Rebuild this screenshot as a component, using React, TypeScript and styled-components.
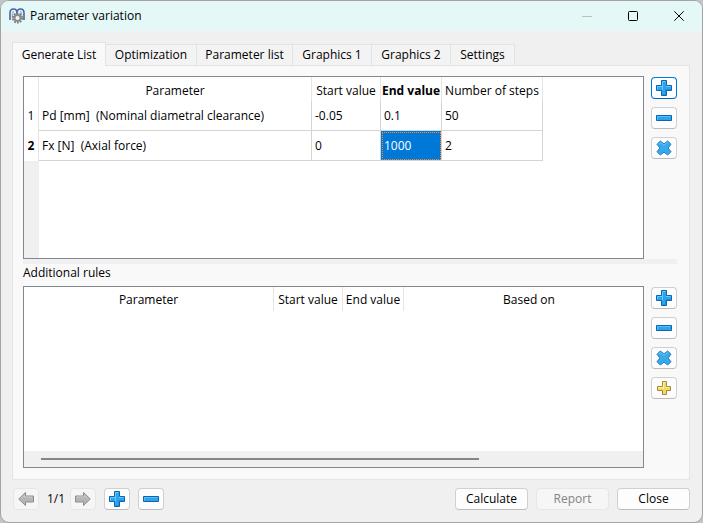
import React from "react";
import styled, { createGlobalStyle, css } from "styled-components";

const GlobalStyle = createGlobalStyle`
  * { box-sizing: border-box; }
  body {
    margin: 0;
    background: #c4c4c6;
    color: #000;
    font: 12px/16px "Open Sans", "Noto Sans", sans-serif;
  }
  button { font: inherit; color: inherit; }
`;

const Window = styled.div`
  display: flex;
  flex-direction: column;
  min-height: 100vh;
  border: 1px solid #a3a3a3;
  border-radius: 9px;
  background: #f0f0f0;
  overflow: hidden;
`;

const TitleBar = styled.header`
  display: flex;
  align-items: center;
  height: 30px;
  padding-left: 8px;
  background: #e3f8f7;
`;

const Title = styled.h1`
  flex: 1;
  margin: 0 0 0 5px;
  font-size: 12px;
  font-weight: 400;
`;

const CaptionButton = styled.button`
  display: grid;
  place-items: center;
  width: 46px;
  height: 30px;
  padding: 0;
  border: 0;
  background: none;
`;

const Body = styled.main`
  flex: 1;
  display: flex;
  flex-direction: column;
  padding: 11px 12px 12px 11px;
`;

const TabList = styled.div`
  display: flex;
  align-items: flex-end;
  height: 24px;
`;

const Tab = styled.button<{ $width: number; $active?: boolean }>`
  position: relative;
  width: ${(p) => p.$width}px;
  height: 22px;
  padding: 0;
  border: 1px solid #e3e3e3;
  border-left-width: 0;
  background: #f3f3f3;
  white-space: nowrap;
  ${(p) =>
    p.$active &&
    css`
      z-index: 1;
      height: 24px;
      border-left-width: 1px;
      border-bottom: 0;
      background: #f9f9f9;
    `}
`;

const Pane = styled.section`
  flex: 1;
  display: flex;
  flex-direction: column;
  margin-top: -1px;
  padding: 10px 12px 11px 10px;
  border: 1px solid #e5e5e5;
  background: #f9f9f9;
`;

const Section = styled.div`
  flex: 1 1 0px;
  display: flex;
  gap: 7px;
`;

const TableFrame = styled.div`
  flex: 1;
  min-width: 0;
  display: flex;
  flex-direction: column;
  border: 1px solid #828790;
  background: #fff;
  overflow: hidden;
`;

const Grid = styled.table`
  table-layout: fixed;
  width: 0;
  border-collapse: separate;
  border-spacing: 0;
  white-space: pre;
`;

const Col = styled.col<{ $width: number }>`
  width: ${(p) => p.$width}px;
`;

const HeadCell = styled.th<{ $bold?: boolean }>`
  height: 24px;
  padding: 3px 0 0;
  border-right: 1px solid #e5e5e5;
  font-weight: ${(p) => (p.$bold ? 700 : 400)};
  text-align: center;
`;

const RowHead = styled(HeadCell)`
  height: 30px;
  padding: 0;
`;

const Cell = styled.td<{ $selected?: boolean }>`
  height: 30px;
  padding: 0 3px;
  border-right: 1px solid #d4d4d4;
  border-bottom: 1px solid #d4d4d4;
  ${(p) =>
    p.$selected &&
    css`
      background: #0078d7;
      color: #fff;
      outline: 1px dotted #ff8728;
      outline-offset: -2px;
    `}
`;

const HeadFiller = styled.div`
  flex: 1;
  width: 15px;
  background: #f0f0f0;
`;

const ScrollTrack = styled.div`
  margin-top: auto;
  height: 16px;
  padding: 7px 164px 0 17px;
  background: #f0f0f0;
`;

const ScrollThumb = styled.div`
  height: 2px;
  background: #858585;
`;

const Tools = styled.div`
  display: flex;
  flex-direction: column;
  gap: 8px;
  padding-top: 1px;
`;

const PushButton = styled.button<{ $focused?: boolean }>`
  display: grid;
  place-items: center;
  width: 73px;
  height: 22px;
  padding: 0;
  border: 1px solid ${(p) => (p.$focused ? "#0078d4" : "#d0d0d0")};
  border-bottom-color: ${(p) => (p.$focused ? "#0067c0" : "#bcbcbc")};
  border-radius: 4px;
  background: #fdfdfd;
  &:disabled {
    border-color: #e6e6e6;
    background: #f6f6f6;
    color: #838383;
  }
`;

const IconButton = styled(PushButton)`
  width: 26px;
`;

const Splitter = styled.div`
  height: 5px;
  background: #f0f0f0;
`;

const SectionTitle = styled.h2`
  margin: 0;
  height: 22px;
  font-size: 12px;
  line-height: 18px;
  font-weight: 400;
`;

const Footer = styled.footer`
  display: flex;
  align-items: center;
  gap: 8px;
  padding: 8px 0 0 1px;
`;

const PageLabel = styled.span`
  width: 15px;
  white-space: nowrap;
`;

const Spacer = styled.div`
  flex: 1;
`;

function AppIcon() {
  return (
    <svg width="16" height="16" viewBox="0 0 16 16" fill="none" aria-hidden="true">
      <path d="M1 12V5Q1 1 4.500 1T8 5V8M8 5Q8 1 11.500 1T15 5V12" stroke="#4a64a0" strokeWidth="1.600" />
      <path d="M3.500 11V6Q3.500 3.500 5 3.500M12.500 11V6Q12.500 3.500 11 3.500" stroke="#a9b9dc" strokeWidth="1.500" />
      <circle cx="8.500" cy="10" r="4.600" stroke="#777" strokeWidth="1.800" strokeDasharray="1.700 1.200" />
      <circle cx="8.500" cy="10" r="3" fill="#f4f4f4" stroke="#8d8d8d" strokeWidth="2" />
    </svg>
  );
}

function PlusIcon() {
  return (
    <svg width="16" height="16" viewBox="0 0 16 16" aria-hidden="true">
      <path d="M5.500.5h5v5h5v5h-5v5h-5v-5h-5v-5h5z" fill="#2da5ee" stroke="#0b66b1" />
      <path d="M6.500 10V1.500h3M1.500 9.500v-3h5M10 6.500h4.500" fill="none" stroke="#6cc8fa" />
      <path d="M7 14.500h2.500v-5h5" fill="none" stroke="#1d8ddc" />
    </svg>
  );
}

function MinusIcon() {
  return (
    <svg width="16" height="16" viewBox="0 0 16 16" aria-hidden="true">
      <path d="M.5 5.500h15v5H.5z" fill="#2da5ee" stroke="#0b66b1" />
      <path d="M1.500 9.500v-3h13" fill="none" stroke="#5cbff8" />
    </svg>
  );
}

function CrossIcon() {
  return (
    <svg width="16" height="16" viewBox="0 0 16 16" aria-hidden="true">
      <path
        d="M4.300 1 8 3.800 11.700 1 15 4.300 12.200 8 15 11.700 11.700 15 8 12.200 4.300 15 1 11.700 3.800 8 1 4.300z"
        fill="#38a9ec"
        stroke="#2a7fbf"
        strokeLinejoin="round"
      />
      <path d="M2.500 4.300 4.300 2.500 8 5.200l3.700-2.700" fill="none" stroke="#6cc4f5" />
    </svg>
  );
}

function YellowPlusIcon() {
  return (
    <svg width="16" height="16" viewBox="0 0 16 16" aria-hidden="true">
      <path d="M6.500 1.500h4v5h4v4h-4v4h-4v-4h-5v-4h5z" fill="#f0d968" stroke="#a98b2c" />
      <path d="M7.500 9V2.500h2M2.500 9V7.500h5M10 7.500h3.500" fill="none" stroke="#fbf0a8" />
    </svg>
  );
}

function ArrowIcon({ direction }: { direction: "left" | "right" }) {
  return (
    <svg width="16" height="16" viewBox="0 0 16 16" aria-hidden="true">
      <path
        d={direction === "left" ? "M.7 8 7.500 1.500v3.500h8v6h-8v3.500z" : "M15.300 8 8.500 1.500v3.500h-8v6h8v3.500z"}
        fill="#b5b5b5"
        stroke="#8c8c8c"
      />
      <path d={direction === "left" ? "M2.500 8l4-4v2h8" : "M1.500 6h8v-2l4 4"} fill="none" stroke="#cdcdcd" />
    </svg>
  );
}

const tabs = [
  { label: "Generate List", width: 94 },
  { label: "Optimization", width: 91 },
  { label: "Parameter list", width: 96 },
  { label: "Graphics 1", width: 79 },
  { label: "Graphics 2", width: 79 },
  { label: "Settings", width: 64 },
];

const parameters = [
  ["Pd [mm]  (Nominal diametral clearance)", "-0.05", "0.1", "50"],
  ["Fx [N]  (Axial force)", "0", "1000", "2"],
];

export default function App() {
  return (
    <>
      <GlobalStyle />
      <Window>
        <TitleBar>
          <AppIcon />
          <Title>Parameter variation</Title>
          <CaptionButton aria-label="Minimize" disabled>
            <svg width="10" height="10" viewBox="0 0 10 10">
              <path d="M0 5.500h10" stroke="#b3c4c3" />
            </svg>
          </CaptionButton>
          <CaptionButton aria-label="Maximize">
            <svg width="10" height="10" viewBox="0 0 10 10">
              <rect x=".5" y=".5" width="9" height="9" rx="1" fill="none" stroke="#000" />
            </svg>
          </CaptionButton>
          <CaptionButton aria-label="Close window">
            <svg width="10" height="10" viewBox="0 0 10 10">
              <path d="M.3.3l9.400 9.400M9.700.3.3 9.700" stroke="#000" />
            </svg>
          </CaptionButton>
        </TitleBar>
        <Body>
          <TabList role="tablist">
            {tabs.map((tab, i) => (
              <Tab key={tab.label} role="tab" aria-selected={i === 0} $active={i === 0} $width={tab.width}>
                {tab.label}
              </Tab>
            ))}
          </TabList>
          <Pane role="tabpanel">
            <Section>
              <TableFrame>
                <Grid>
                  <colgroup>
                    <Col $width={15} />
                    <Col $width={273} />
                    <Col $width={69} />
                    <Col $width={61} />
                    <Col $width={101} />
                  </colgroup>
                  <thead>
                    <tr>
                      <HeadCell />
                      <HeadCell>Parameter</HeadCell>
                      <HeadCell>Start value</HeadCell>
                      <HeadCell $bold>End value</HeadCell>
                      <HeadCell>Number of steps</HeadCell>
                    </tr>
                  </thead>
                  <tbody>
                    {parameters.map((row, r) => (
                      <tr key={row[0]}>
                        <RowHead scope="row" $bold={r === 1}>
                          {r + 1}
                        </RowHead>
                        {row.map((value, c) => (
                          <Cell key={c} $selected={r === 1 && c === 2}>
                            {value}
                          </Cell>
                        ))}
                      </tr>
                    ))}
                  </tbody>
                </Grid>
                <HeadFiller />
              </TableFrame>
              <Tools>
                <IconButton aria-label="Add parameter" $focused>
                  <PlusIcon />
                </IconButton>
                <IconButton aria-label="Remove parameter">
                  <MinusIcon />
                </IconButton>
                <IconButton aria-label="Clear parameters">
                  <CrossIcon />
                </IconButton>
              </Tools>
            </Section>
            <Splitter />
            <SectionTitle>Additional rules</SectionTitle>
            <Section>
              <TableFrame>
                <Grid>
                  <colgroup>
                    <Col $width={250} />
                    <Col $width={69} />
                    <Col $width={61} />
                    <Col $width={251} />
                  </colgroup>
                  <thead>
                    <tr>
                      <HeadCell>Parameter</HeadCell>
                      <HeadCell>Start value</HeadCell>
                      <HeadCell>End value</HeadCell>
                      <HeadCell>Based on</HeadCell>
                    </tr>
                  </thead>
                </Grid>
                <ScrollTrack>
                  <ScrollThumb />
                </ScrollTrack>
              </TableFrame>
              <Tools>
                <IconButton aria-label="Add rule">
                  <PlusIcon />
                </IconButton>
                <IconButton aria-label="Remove rule">
                  <MinusIcon />
                </IconButton>
                <IconButton aria-label="Clear rules">
                  <CrossIcon />
                </IconButton>
                <IconButton aria-label="Add special rule">
                  <YellowPlusIcon />
                </IconButton>
              </Tools>
            </Section>
          </Pane>
          <Footer>
            <IconButton aria-label="Previous" disabled>
              <ArrowIcon direction="left" />
            </IconButton>
            <PageLabel>1/1</PageLabel>
            <IconButton aria-label="Next" disabled>
              <ArrowIcon direction="right" />
            </IconButton>
            <IconButton aria-label="Add page">
              <PlusIcon />
            </IconButton>
            <IconButton aria-label="Remove page">
              <MinusIcon />
            </IconButton>
            <Spacer />
            <PushButton>Calculate</PushButton>
            <PushButton disabled>Report</PushButton>
            <PushButton>Close</PushButton>
          </Footer>
        </Body>
      </Window>
    </>
  );
}
